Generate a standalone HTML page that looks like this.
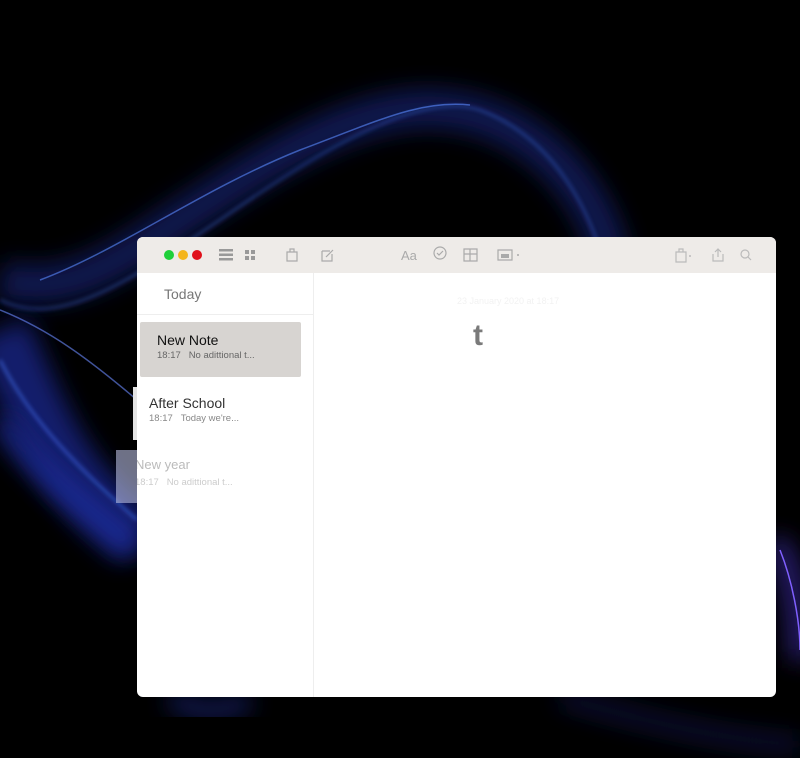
<!DOCTYPE html>
<html><head><meta charset="utf-8"><style>
html,body{margin:0;padding:0;width:800px;height:758px;overflow:hidden;background:#000;font-family:"Liberation Sans",sans-serif}
#bg{position:absolute;left:0;top:0}
.win{position:absolute;left:137px;top:237px;width:639px;height:460px;background:#fff;border-radius:6px;overflow:hidden}
.tb{position:absolute;left:0;top:0;width:639px;height:36px;background:#eeebe8}
.dot{position:absolute;top:13px;width:10px;height:10px;border-radius:50%}
.side{position:absolute;left:0;top:36px;width:176px;height:424px;border-right:1px solid #eee}
.ic{position:absolute;top:10px}
.t{position:absolute;white-space:nowrap}
</style></head><body>
<svg id="bg" width="800" height="758" viewBox="0 0 800 758">
<defs>
<filter id="b" x="-50%" y="-50%" width="200%" height="200%"><feGaussianBlur stdDeviation="2"/></filter>
<filter id="b2" x="-50%" y="-50%" width="200%" height="200%"><feGaussianBlur stdDeviation="12"/></filter>
</defs>
<g fill="none">
<path d="M0 280 C80 300 130 250 210 200 C300 140 380 100 450 110 C540 120 600 200 610 260" stroke="#14206e" stroke-width="40" filter="url(#b2)" opacity=".7"/>
<path d="M0 300 C60 330 130 280 220 220 C320 150 420 90 480 110 C560 140 590 220 600 250" stroke="#3a6ae0" stroke-width="1.5" filter="url(#b)" opacity=".8"/>
<path d="M40 280 C120 250 200 190 300 150 C380 120 420 100 470 105" stroke="#5a8aff" stroke-width="1.5" opacity=".6"/>
<path d="M0 330 C40 420 60 480 140 540" stroke="#1e2c9a" stroke-width="60" filter="url(#b2)" opacity=".7"/>
<path d="M0 360 C30 420 80 470 137 520" stroke="#4a7aff" stroke-width="1.5" filter="url(#b)"/>
<path d="M0 310 C50 330 90 360 137 400" stroke="#6a8aff" stroke-width="1.5" opacity=".6"/>
<path d="M0 420 C30 470 90 510 137 550" stroke="#2030b0" stroke-width="20" filter="url(#b2)" opacity=".7"/>
<path d="M170 697 C190 712 220 716 250 700" stroke="#2030a0" stroke-width="14" filter="url(#b2)" opacity=".7"/>
<path d="M560 697 C640 720 720 740 800 745" stroke="#141e60" stroke-width="16" filter="url(#b2)" opacity=".6"/>
<path d="M776 540 C790 570 800 600 800 660" stroke="#3a2aa0" stroke-width="20" filter="url(#b2)" opacity=".8"/>
<path d="M780 550 C792 580 800 620 800 650" stroke="#8060ff" stroke-width="1.5"/>
</g>
</svg>
<div style="position:absolute;left:133px;top:387px;width:6px;height:53px;background:#e4e4e4"></div>
<div style="position:absolute;left:116px;top:450px;width:24px;height:53px;background:#b8bce0;opacity:.6"></div>
<div class="win">
 <div class="tb">
  <div class="dot" style="left:27px;background:#1fd03a"></div>
  <div class="dot" style="left:41px;background:#f4b51c"></div>
  <div class="dot" style="left:55px;background:#e0101a"></div>
  <svg class="ic" style="left:82px;top:12px" width="14" height="12"><g fill="#999"><rect x="0" y="0" width="14" height="2.5"/><rect x="0" y="4.5" width="14" height="2.5"/><rect x="0" y="9" width="14" height="2.5"/></g></svg>
  <svg class="ic" style="left:108px;top:13px" width="11" height="11"><g fill="#999"><rect x="0" y="0" width="4" height="4"/><rect x="6" y="0" width="4" height="4"/><rect x="0" y="6" width="4" height="4"/><rect x="6" y="6" width="4" height="4"/></g></svg>
  <svg class="ic" style="left:149px;top:11px" width="12" height="14"><path d="M1 4h10v9H1zM4 4V1h4v3" fill="none" stroke="#aaa" stroke-width="1.2"/></svg>
  <svg class="ic" style="left:184px;top:11px" width="14" height="14"><path d="M1 3h8M1 3v10h10V6M5 9l7-7" fill="none" stroke="#aaa" stroke-width="1.2"/></svg>
  <div class="t" style="left:264px;top:11px;font-size:13px;color:#aaa">Aa</div>
  <svg class="ic" style="left:296px;top:9px" width="14" height="14"><circle cx="7" cy="7" r="6" fill="none" stroke="#aaa" stroke-width="1.2"/><path d="M4 7l2 2 4-4" fill="none" stroke="#aaa" stroke-width="1.2"/></svg>
  <svg class="ic" style="left:326px;top:11px" width="15" height="14"><path d="M1 1h13v12H1zM1 6h13M7 1v12" fill="none" stroke="#aaa" stroke-width="1.2"/></svg>
  <svg class="ic" style="left:360px;top:11px" width="24" height="14"><path d="M1 2h14v10H1z" fill="none" stroke="#aaa" stroke-width="1.2"/><rect x="4" y="6" width="8" height="4" fill="#aaa"/><circle cx="21" cy="7" r="1" fill="#aaa"/></svg>
  <svg class="ic" style="left:538px;top:11px" width="18" height="15"><path d="M1 4h10v10H1zM4 4V1h4v3" fill="none" stroke="#bbb" stroke-width="1.2"/><circle cx="15" cy="8" r="1" fill="#bbb"/></svg>
  <svg class="ic" style="left:575px;top:11px" width="12" height="14"><path d="M1 6v7h10V6M6 9V1M3 4l3-3 3 3" fill="none" stroke="#bbb" stroke-width="1.2"/></svg>
  <svg class="ic" style="left:603px;top:12px" width="12" height="12"><circle cx="5" cy="5" r="4" fill="none" stroke="#bbb" stroke-width="1.2"/><path d="M8 8l3 3" stroke="#bbb" stroke-width="1.2"/></svg>
 </div>
 <div class="side">
  <div class="t" style="left:27px;top:13px;font-size:14px;color:#777">Today</div>
  <div style="position:absolute;left:0;top:41px;width:176px;height:1px;background:#eee"></div>
  <div style="position:absolute;left:3px;top:49px;width:161px;height:55px;background:#d7d4d1;border-radius:2px"></div>
  <div class="t" style="left:20px;top:59px;font-size:14px;color:#111">New Note</div>
  <div class="t" style="left:20px;top:77px;font-size:9.5px;color:#666">18:17&nbsp;&nbsp;&nbsp;No adittional t...</div>
  <div class="t" style="left:12px;top:122px;font-size:14px;color:#333">After School</div>
  <div class="t" style="left:12px;top:140px;font-size:9.5px;color:#888">18:17&nbsp;&nbsp;&nbsp;Today we're...</div>
 </div>
 <div class="t" style="left:-2px;top:220px;font-size:13px;color:#bbb">New year</div>
 <div class="t" style="left:-2px;top:240px;font-size:9.5px;color:#ccc">18:17&nbsp;&nbsp;&nbsp;No adittional t...</div>
 <div class="t" style="left:320px;top:59px;font-size:9px;color:#f2f2f2">23 January 2020 at 18:17</div>
 <div class="t" style="left:336px;top:82px;font-size:30px;color:#7a7a7a;font-weight:bold">t</div>
</div>
</body></html>
